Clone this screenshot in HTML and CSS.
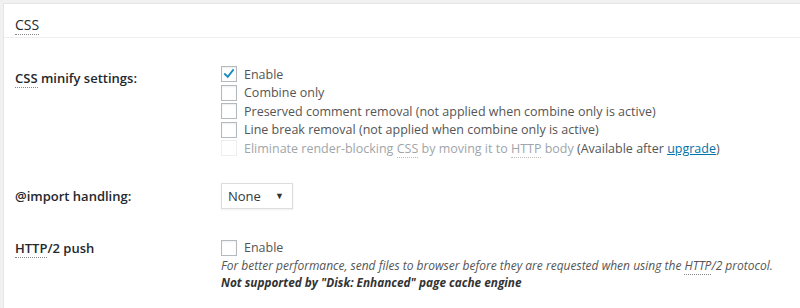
FILE: index.html
```html
<!DOCTYPE html>
<html lang="en">
<head>
    <meta charset="UTF-8">
    <title>CSS settings</title>
    <link rel="stylesheet" href="styles.css">
</head>
<body>
    <div class="postbox">
        <h3 class="hndle"><span><abbr title="Cascading Style Sheets">CSS</abbr></span></h3>

        <div class="inside">
            <!-- Minify settings -->
            <div class="form-row row-minify">
                <div class="row-label"><abbr>CSS</abbr> minify settings:</div>
                <div class="row-field">
                    <label class="check"><span class="box checked"><svg viewBox="0 0 16 16" width="16" height="16"><path d="M3.4 8.2 L6.6 11.2 L12.6 3.6" fill="none" stroke="#1e8cbe" stroke-width="2.2" stroke-linecap="square"/></svg></span>Enable</label>
                    <label class="check"><span class="box"></span>Combine only</label>
                    <label class="check"><span class="box"></span>Preserved comment removal (not applied when combine only is active)</label>
                    <label class="check"><span class="box"></span>Line break removal (not applied when combine only is active)</label>
                    <label class="check disabled"><span class="box"></span><span class="muted">Eliminate render-blocking <abbr>CSS</abbr> by moving it to <abbr>HTTP</abbr> body</span>&nbsp;(Available after&nbsp;<a href="#">upgrade</a>)</label>
                </div>
            </div>

            <!-- Import handling -->
            <div class="form-row row-import">
                <div class="row-label">@import handling:</div>
                <div class="row-field">
                    <div class="select">None<span class="arrow">&#9660;</span></div>
                </div>
            </div>

            <!-- HTTP/2 push -->
            <div class="form-row row-push">
                <div class="row-label"><abbr>HTTP</abbr>/2 push</div>
                <div class="row-field">
                    <label class="check"><span class="box"></span>Enable</label>
                    <p class="description">For better performance, send files to browser before they are requested when using the <abbr>HTTP</abbr>/2 protocol.</p>
                    <p class="description strong">Not supported by "Disk: Enhanced" page cache engine</p>
                </div>
            </div>
        </div>
    </div>
</body>
</html>
```

FILE: styles.css
```css
/* Page */
html, body {
    margin: 0;
    padding: 0;
}

body {
    background: #f1f1f1;
    padding: 3px 0 0 3px;
    height: 308px;
    box-sizing: border-box;
    overflow: hidden;
    font-family: "Open Sans", "Noto Sans", sans-serif;
    font-size: 12.5px;
    color: #444;
}

abbr {
    text-decoration: none;
    border-bottom: 1px dotted #888;
}

/* Box */
.postbox {
    background: #fff;
    border-top: 1px solid #e5e5e5;
    border-left: 1px solid #e5e5e5;
    height: 100%;
}

.hndle {
    margin: 0;
    height: 33px;
    padding: 0 11px;
    display: flex;
    align-items: center;
    font-size: 14px;
    font-weight: 400;
    color: #23282d;
    border-bottom: 1px solid #eee;
}

.hndle span {
    padding-top: 8px;
}

.inside {
    padding: 0 11px;
}

/* Rows */
.form-row {
    display: flex;
}

.row-label {
    width: 206px;
    flex: none;
    font-weight: 600;
    color: #23282d;
    font-size: 13px;
}

.row-minify {
    padding-top: 27px;
}

.row-minify .row-label {
    padding-top: 4px;
}

.row-import {
    padding-top: 25px;
}

.row-import .row-label {
    padding-top: 4px;
}

.row-push {
    padding-top: 30px;
}

/* Checkboxes */
.check {
    display: flex;
    align-items: center;
    height: 18.5px;
    white-space: nowrap;
    color: #555;
}

.box {
    width: 14px;
    height: 14px;
    border: 1px solid #b4b9be;
    background: #fff;
    margin-right: 7px;
    flex: none;
    display: flex;
    align-items: center;
    justify-content: center;
    box-shadow: inset 0 1px 2px rgba(0, 0, 0, 0.07);
}

.box svg {
    width: 14px;
    height: 14px;
}

.check.disabled .box {
    border-color: #eee;
    box-shadow: none;
}

.muted {
    color: #a0a5aa;
}

.muted abbr {
    border-bottom-color: #bbb;
}

.check a {
    color: #0073aa;
}

/* Select */
.select {
    width: 72px;
    height: 26px;
    box-sizing: border-box;
    border: 1px solid #ddd;
    padding: 0 8px 0 6px;
    display: flex;
    align-items: center;
    justify-content: space-between;
    font-size: 13px;
    color: #32373c;
    box-shadow: 0 1px 2px rgba(0, 0, 0, 0.07);
}

.select .arrow {
    font-size: 9px;
    color: #333;
}

/* Descriptions */
.description {
    margin: 0;
    font-style: italic;
    font-size: 12px;
    line-height: 17px;
    color: #555;
    white-space: nowrap;
}

.description.strong {
    font-weight: 700;
    font-size: 11.8px;
    color: #333;
}
```
